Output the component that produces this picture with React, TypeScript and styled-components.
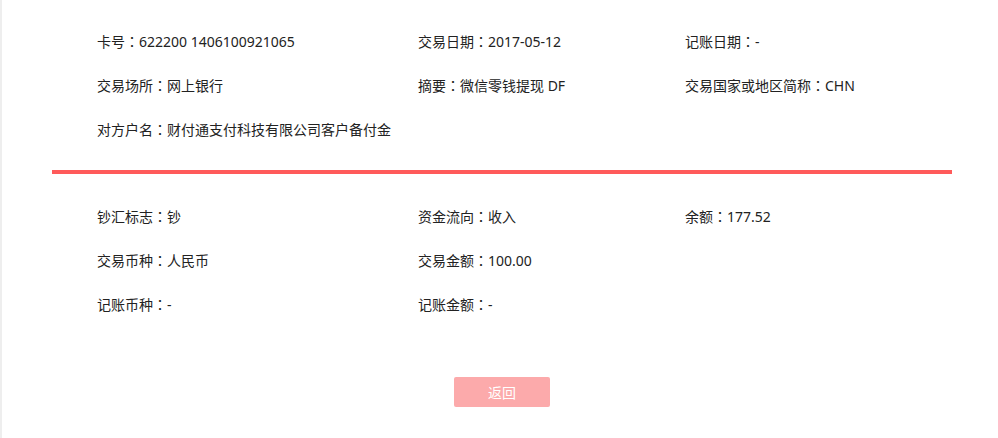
import React from "react";
import styled, { createGlobalStyle } from "styled-components";

const GlobalStyle = createGlobalStyle`
    html, body {
        margin: 0;
        padding: 0;
        background: #fff;
    }
    body {
        font-family: "Noto Sans", "Noto Sans CJK SC", sans-serif;
        color: #222;
    }
`;

const Page = styled.div`
    height: 438px;
    box-sizing: border-box;
    border-left: 2px solid #eeeeee;
    padding: 19px 46px 0 50px;
`;

const Section = styled.div`
    display: grid;
    grid-template-columns: 321px 267px 1fr;
    padding-left: 45px;
`;

const Item = styled.div`
    height: 44px;
    line-height: 44px;
    font-size: 14px;
    white-space: nowrap;
`;

const Colon = styled.span`
    font-family: "Noto Sans CJK TC", sans-serif;
`;

const Divider = styled.div`
    height: 4px;
    background: #ff5a5a;
    margin: 19px 0 20px;
`;

const Footer = styled.div`
    display: flex;
    justify-content: center;
    padding-top: 51px;
`;

const BackButton = styled.button`
    width: 96px;
    height: 30px;
    border: none;
    border-radius: 2px;
    background: #fcaaab;
    color: #fff;
    font-family: "Noto Sans CJK SC", sans-serif;
    font-size: 14px;
    cursor: pointer;
`;

type Field = { label: string; value: string };

const top: Field[] = [
    { label: "卡号", value: "622200 1406100921065" },
    { label: "交易日期", value: "2017-05-12" },
    { label: "记账日期", value: "-" },
    { label: "交易场所", value: "网上银行" },
    { label: "摘要", value: "微信零钱提现 DF" },
    { label: "交易国家或地区简称", value: "CHN" },
    { label: "对方户名", value: "财付通支付科技有限公司客户备付金" },
];

const bottom: Field[] = [
    { label: "钞汇标志", value: "钞" },
    { label: "资金流向", value: "收入" },
    { label: "余额", value: "177.52" },
    { label: "交易币种", value: "人民币" },
    { label: "交易金额", value: "100.00" },
    { label: "", value: "" },
    { label: "记账币种", value: "-" },
    { label: "记账金额", value: "-" },
];

const renderFields = (list: Field[]) =>
    list.map((f, i) => (
        <Item key={i}>
            {f.label && (
                <>
                    {f.label}
                    <Colon>：</Colon>
                    {f.value}
                </>
            )}
        </Item>
    ));

export default function App() {
    return (
        <>
            <GlobalStyle />
            <Page>
                <Section>{renderFields(top)}</Section>
                <Divider />
                <Section>{renderFields(bottom)}</Section>
                <Footer>
                    <BackButton>返回</BackButton>
                </Footer>
            </Page>
        </>
    );
}
